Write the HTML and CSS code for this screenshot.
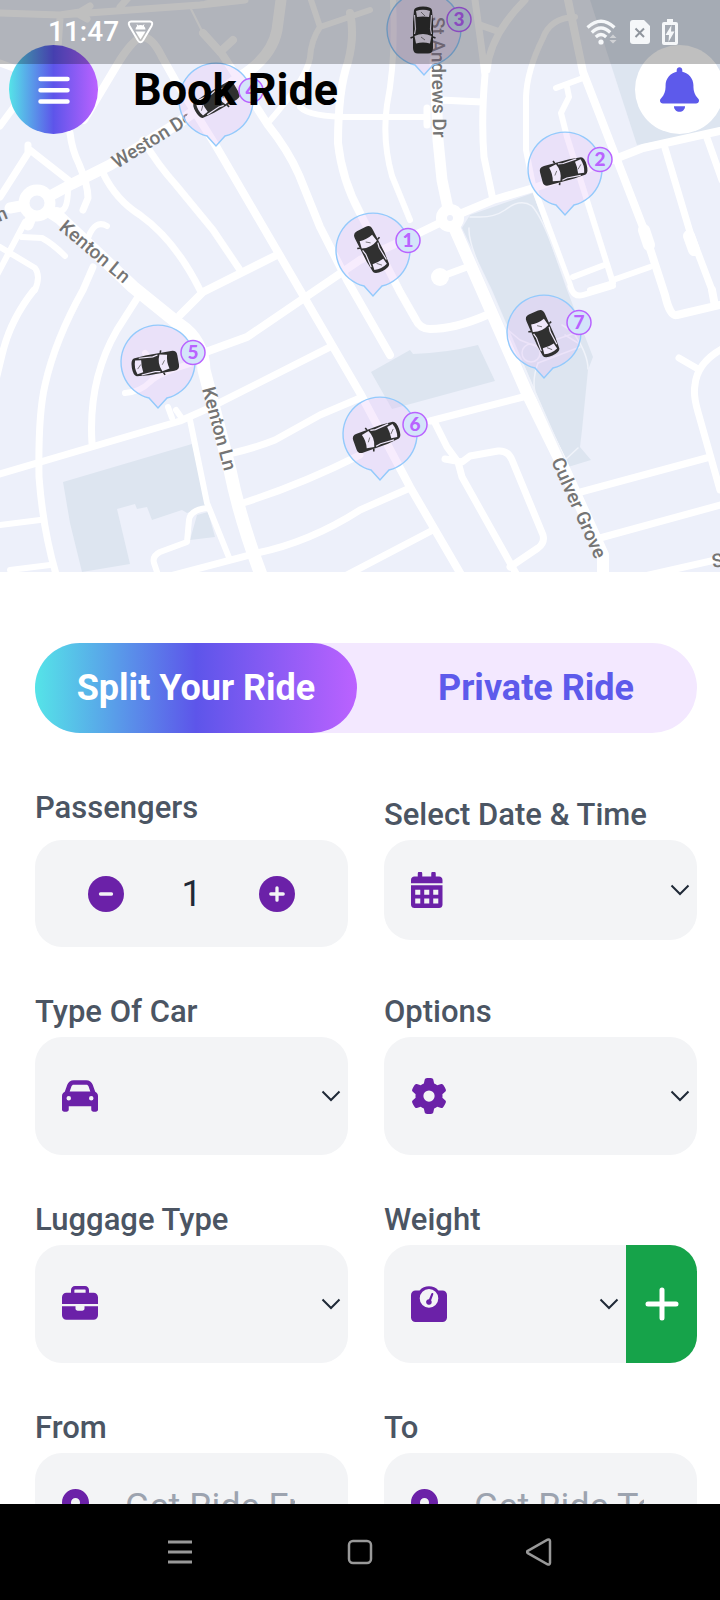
FILE: index.html
```html
<!DOCTYPE html>
<html lang="en">
<head>
<meta charset="utf-8">
<meta name="viewport" content="width=device-width, initial-scale=1">
<title>Book Ride</title>
<link rel="stylesheet" href="styles.css">
</head>
<body>
<div class="screen">
  <main class="content">
    <section class="map" aria-label="Map of nearby rides">
      <svg class="map-canvas" viewBox="0 0 720 572">
        <defs>
          <clipPath id="weston-clip"><path d="M90 100H200L187 115L184 130V190H90z"/></clipPath>
          <g id="car">
            <path d="M-9 -20Q-8 -23.500 0 -23.500T9 -20L10 -8V18Q10 23.500 5 23.500H-5Q-10 23.500 -10 18V-8z" fill="#303030"/>
            <path d="M-7 -19Q0 -21.500 7 -19L6 -13Q0 -14 -6 -13zM-8.500 6Q0 2 8.500 6L7 13.500Q0 11.500 -7 13.500z" fill="#f0e8fb"/>
            <path d="M-8.500 -15L-7.500 -1L-8.500 4M8.500 -15L7.500 -1L8.500 4" fill="none" stroke="#f0e8fb" stroke-width="1.200"/>
            <path d="M-10 7L-12.500 8M10 7L12.500 8" stroke="#303030" stroke-width="1.600"/>
            <path d="M-2 -18L2 -14M-2 7L2 10" stroke="#555" stroke-width=".7"/>
          </g>
          <g id="pin">
            <path d="M-9 36A37 37 0 1 1 9 36L0 46z" fill="#e0b8f6" fill-opacity=".27" stroke="#93cafc" stroke-width="1.400"/>
          </g>
          <circle id="badge" cx="35" cy="-9.500" r="12" fill="#d4e5fa" stroke="#b963ff" stroke-width="1.500"/>
        </defs>
        <rect width="720" height="572" fill="#edf0fa"/>
        <g fill="#dde5f0">
          <path d="M590 0L637 145L720 130V0z"/>
          <path d="M462 228L470 215L533 193L567 290L593 357L588 370L582 430L580 447L591 460L568 467L492 290z"/>
          <path d="M63 482L192 444L207 507L187 513L182 510L152 520L147 507L137 509L135 504L117 509L130 564L82 572L70 523z"/>
          <path d="M197 515L208 512L215 537L190 540z"/>
          <path d="M371 372L410 350L413 354Q446 353 478 345L495 381L392 409z"/>
        </g>
        <g fill="none" stroke="#fff" stroke-linecap="round" stroke-linejoin="round">
          <g stroke-width="7">
            <path d="M0 13L60 15L80 12L90 6M60 15L200 5L245 0M120 7L128 -2M78 14L87 19M206 4L245 -4M60 18L58 48"/>
            <path d="M84 120L120 60Q135 37 143 37Q153 38 162 57L175 80L216 146L300 290L360 393L410 487L463 578" stroke-width="8"/>
            <path d="M190 7L203 33" stroke-width="2"/>
            <path d="M203 33L222 54L268 125Q288 150 299 175L320 227L347 280L390 355M220 52L233 40" stroke-width="8"/>
            <path d="M350 13Q355 35 348 62Q338 90 338 143Q342 180 360 213L400 292L416 320Q420 329 430 329Q455 329 487 315" stroke-width="8"/>
            <path d="M370 10L320 27L311 0M320 27Q311 40 310 58Q306 80 267 124M300 107Q310 118 360 117L427 117" stroke-width="6"/>
            <path d="M393 0Q396 60 387 105Q382 140 392 176L410 220" stroke-width="6"/>
            <path d="M475 0Q482 50 485 75Q481 120 484 157L493 200M525 0Q490 35 487 70M480 25L497 31M440 100L482 102M427 108V125" stroke-width="7"/>
            <path d="M575 17Q550 18 543 38Q527 70 526 97V150L533 185L570 285Q573 298 583 295L613 286" stroke-width="6"/>
            <path d="M568 0L583 72L643 227L665 295Q670 317 677 315L720 305M712 290L715 306" stroke-width="8"/>
            <path d="M644 230L649 245M689 236L694 250" stroke-width="12"/>
            <path d="M556 88L583 78M567 87L569 97L561 113L567 137L613 283M573 277L607 264M613 280L650 267M590 290L613 283" stroke-width="6"/>
            <path d="M665 148L690 232L712 290M707 138L722 180"/>
            <path d="M440 277L467 267"/>
            <path d="M0 197L30 150L72 183M28 145V152M0 63L16 69M0 126L22 96M70 133Q72 150 79 164Q88 185 88 198L83 210"/>
            <path d="M68 188Q68 215 57 210M25 222L-3 275M22 237L42 238Q53 244 65 256M0 247L35 268Q41 276 35 290M107 226Q95 219 88 238" stroke-width="6"/>
            <path d="M103 173Q116 200 140 215Q175 240 200 290M143 140Q158 165 176 185L213 230L240 270M93 267L83 290Q55 340 45 385Q38 415 39 477Q43 530 56 574"/>
            <path d="M34 290Q10 320 2 355L-4 380M138 297L117 330Q88 380 92 443" stroke-width="7"/>
            <path d="M0 474L180 421L207 409L330 347M233 453Q255 448 275 440L320 415L360 398M243 503Q300 485 360 455M155 580L257 553Q310 542 360 510L410 488M345 576L433 530"/>
            <path d="M190 420L207 503L230 560M207 508Q190 510 189 520L187 542L160 552Q152 556 154 563L158 575M0 525L40 520M10 570L50 565" stroke-width="6"/>
            <path d="M125 393Q140 392 150 382Q158 373 193 363M168 407L172 418M145 353L158 368M176 410L181 417" stroke-width="6"/>
            <path d="M430 421L523 397M435 423L447 447L458 462L462 477L518 577M445 459L462 462L470 456L498 451Q508 450 512 460L543 535Q545 543 538 548L510 567"/>
            <path d="M577 493L710 457M600 538L724 504M640 577L720 559M679 358L698 369M722 349Q697 363 695 385Q693 395 698 412L720 490"/>
          </g>
          <g stroke-width="8">
            <path d="M450 218L493 200L537 187L620 157L643 148L720 131M450 218L415 235L360 260L247 337L203 353M277 255L203 292L180 315" stroke-width="8"/>
            <path d="M37 203L72 184L110 165L180 122L240 77Q272 57 277 30L281 0" stroke-width="11"/>
            <path d="M435 60L438 140L442 180L450 218" stroke-width="11"/>
            <path d="M450 218L480 286L527 393L560 460L603 555V580" stroke-width="12"/>
            <path d="M37 203L60 218L133 287L180 325Q203 340 204 370L230 470Q240 520 263 580" stroke-width="13"/>
            <path d="M37 203L10 208M37 203L28 225" stroke-width="11"/>
          </g>
          <circle cx="37" cy="203" r="13" stroke-width="11" fill="#edf0fa"/>
          <path d="M470 217L480 217Q495 217 505 210Q520 198 532 206Q540 215 550 240L567 285M469 228Q468 245 490 290L565 460L578 448M575 335Q588 355 588 369M538 363Q530 385 538 400L565 460" stroke="#f0f3fa" stroke-width="1.500"/>
          <circle cx="531" cy="353" r="9" stroke="#f0f3fa" stroke-width="1.500"/>
          <path d="M508 330L520 340L553 353M538 363L580 347M540 345L575 333L562 325M565 335L578 343" stroke="#f0f3fa" stroke-width="1.500"/>
        </g>
        <g fill="#fff"><circle cx="450" cy="218" r="14"/><circle cx="440" cy="277" r="9"/></g>
        <circle cx="450" cy="218" r="3" fill="#edf0fa"/>
        <g class="street">
          <g clip-path="url(#weston-clip)"><text transform="translate(117 169) rotate(-32)">Weston Do</text></g>
          <text transform="translate(-1 222) rotate(-22)">n</text>
          <text transform="translate(58 229) rotate(40)">Kenton Ln</text>
          <text transform="translate(202 389) rotate(75)">Kenton Ln</text>
          <text transform="translate(431 17) rotate(89)">St Andrews Dr</text>
          <text transform="translate(551 461) rotate(66)">Culver Grove</text>
          <text transform="translate(713 568) rotate(-10)">S</text>
        </g>
        <g class="pins">
          <g transform="translate(373 250)"><use href="#pin"/><use href="#car" transform="translate(-1 0) rotate(153)"/><use href="#badge"/><text x="35" y="-3">1</text></g>
          <g transform="translate(565 169)"><use href="#pin"/><use href="#car" transform="translate(-1 2) rotate(75)"/><use href="#badge"/><text x="35" y="-3">2</text></g>
          <g transform="translate(424 29)"><use href="#pin"/><use href="#car" transform="translate(-1 1)"/><use href="#badge"/><text x="35" y="-3">3</text></g>
          <g transform="translate(216 100)"><use href="#pin"/><use href="#car" transform="rotate(240)"/><use href="#badge"/><text x="35" y="-3">4</text></g>
          <g transform="translate(158 362)"><use href="#pin"/><use href="#car" transform="translate(-3 2) rotate(260)"/><use href="#badge"/><text x="35" y="-3">5</text></g>
          <g transform="translate(380 434)"><use href="#pin"/><use href="#car" transform="translate(-3 3) rotate(70)"/><use href="#badge"/><text x="35" y="-3">6</text></g>
          <g transform="translate(544 332)"><use href="#pin"/><use href="#car" transform="translate(-1 2) rotate(156)"/><use href="#badge"/><text x="35" y="-3">7</text></g>
        </g>
      </svg>
      <header class="topbar">
        <button class="round menu" aria-label="Menu">
          <svg width="32" height="28" viewBox="0 0 32 28" stroke="#fff" stroke-width="4.500" stroke-linecap="round"><path d="M2.500 3H29.500M2.500 14.300H29.500M2.500 25.500H29.500"/></svg>
        </button>
        <h1 class="title">Book Ride</h1>
        <button class="round bell" aria-label="Notifications">
          <svg width="39" height="45" viewBox="0 0 448 512" fill="#5d5aeb"><path d="M224 0c-17.700 0-32 14.300-32 32V51.200C119 66 64 130.600 64 208v18.800c0 47-17.300 92.400-48.500 127.600l-7.400 8.300c-8.400 9.400-10.400 22.900-5.300 34.400S19.400 416 32 416H416c12.600 0 24-7.400 29.200-18.900s3.100-25-5.300-34.400l-7.400-8.300C401.300 319.200 384 273.900 384 226.800V208c0-77.400-55-142-128-156.800V32c0-17.700-14.300-32-32-32zm45.300 493.300c12-12 18.700-28.300 18.700-45.300H224 160c0 17 6.700 33.300 18.700 45.300s28.300 18.700 45.300 18.700s33.300-6.700 45.300-18.700z"/></svg>
        </button>
      </header>
    </section>

    <form class="form">
      <div class="tabs">
        <button type="button" class="tab tab-active">Split Your Ride</button>
        <button type="button" class="tab">Private Ride</button>
      </div>
      <div class="fields">
        <div class="field">
          <label class="label label-spaced" for="passengers">Passengers</label>
          <div class="box box-short stepper">
            <button type="button" class="step" aria-label="Fewer passengers"><svg width="36" height="36" viewBox="0 0 36 36"><circle cx="18" cy="18" r="18" fill="#6b21a8"/><path d="M12.500 18H23.500" stroke="#f3f4f6" stroke-width="3.300" stroke-linecap="round"/></svg></button>
            <input class="count" id="passengers" type="text" inputmode="numeric" value="1">
            <button type="button" class="step" aria-label="More passengers"><svg width="36" height="36" viewBox="0 0 36 36"><circle cx="18" cy="18" r="18" fill="#6b21a8"/><path d="M11.800 18H24.200M18 11.800V24.200" stroke="#f3f4f6" stroke-width="3.300" stroke-linecap="round"/></svg></button>
          </div>
        </div>
        <div class="field field-low">
          <label class="label" for="when">Select Date &amp; Time</label>
          <div class="box box-date">
            <svg class="icon" viewBox="0 0 448 512"><path fill-rule="evenodd" d="M0 464c0 26.500 21.500 48 48 48h352c26.500 0 48-21.500 48-48V188H0zM60 252h72v72H60zM188 252h72v72h-72zM316 252h72v72h-72zM60 376h72v72H60zM188 376h72v72h-72zM316 376h72v72h-72zM400 64h-48V24a24 24 0 0 0-64 0v40H160V24a24 24 0 0 0-64 0v40H48C21.500 64 0 85.500 0 112v48h448v-48c0-26.500-21.500-48-48-48z"/></svg>
            <select class="select" id="when"><option></option></select>
            <svg class="chevron" viewBox="0 0 20 12"><path d="M1.500 1.500L10 10L18.500 1.500"/></svg>
          </div>
        </div>
        <div class="field">
          <label class="label" for="car-type">Type Of Car</label>
          <div class="box">
            <svg class="icon" viewBox="0 0 512 512"><path d="M135.200 117.400L109.100 192H402.900l-26.100-74.600C372.300 104.600 360.200 96 346.600 96H165.400c-13.600 0-25.700 8.600-30.200 21.400zM39.600 196.800L74.800 96.300C88.300 57.800 124.600 32 165.400 32H346.600c40.800 0 77.100 25.800 90.600 64.300l35.200 100.500c23.200 9.600 39.600 32.500 39.600 59.200V400v48c0 17.700-14.300 32-32 32H448c-17.700 0-32-14.300-32-32V400H96v48c0 17.700-14.300 32-32 32H32c-17.700 0-32-14.300-32-32V400 256c0-26.700 16.400-49.600 39.600-59.200zM128 288a32 32 0 1 0 -64 0 32 32 0 1 0 64 0zm288 32a32 32 0 1 0 0-64 32 32 0 1 0 0 64z"/></svg>
            <select class="select" id="car-type"><option></option></select>
            <svg class="chevron" viewBox="0 0 20 12"><path d="M1.500 1.500L10 10L18.500 1.500"/></svg>
          </div>
        </div>
        <div class="field">
          <label class="label" for="options">Options</label>
          <div class="box">
            <svg class="icon" viewBox="0 0 512 512"><path d="M495.900 166.600c3.200 8.700 .5 18.400-6.400 24.600l-43.300 39.400c1.100 8.300 1.700 16.800 1.700 25.400s-.6 17.100-1.700 25.400l43.300 39.400c6.900 6.200 9.600 15.900 6.400 24.600c-4.400 11.900-9.700 23.300-15.800 34.300l-4.700 8.100c-6.600 11-14 21.400-22.100 31.200c-5.900 7.200-15.700 9.600-24.500 6.800l-55.700-17.700c-13.400 10.300-28.200 18.900-44 25.400l-12.500 57.100c-2 9.100-9 16.300-18.200 17.800c-13.800 2.300-28 3.500-42.500 3.500s-28.700-1.200-42.500-3.500c-9.200-1.500-16.200-8.700-18.200-17.800l-12.500-57.100c-15.800-6.500-30.600-15.100-44-25.400L83.100 425.900c-8.800 2.800-18.600 .3-24.500-6.800c-8.100-9.800-15.500-20.200-22.100-31.200l-4.700-8.100c-6.100-11-11.400-22.400-15.800-34.300c-3.200-8.700-.5-18.400 6.400-24.600l43.300-39.400C64.600 273.100 64 264.600 64 256s.6-17.100 1.700-25.400L22.400 191.200c-6.900-6.200-9.600-15.900-6.400-24.600c4.400-11.900 9.700-23.300 15.800-34.300l4.700-8.100c6.600-11 14-21.400 22.100-31.200c5.900-7.200 15.700-9.600 24.500-6.800l55.700 17.700c13.400-10.300 28.200-18.900 44-25.400l12.500-57.100c2-9.100 9-16.300 18.200-17.800C227.300 1.200 241.500 0 256 0s28.700 1.200 42.500 3.500c9.200 1.500 16.200 8.700 18.200 17.800l12.500 57.100c15.800 6.500 30.600 15.100 44 25.400l55.700-17.700c8.800-2.800 18.600-.3 24.500 6.800c8.100 9.800 15.500 20.200 22.100 31.200l4.700 8.100c6.100 11 11.400 22.400 15.800 34.300zM256 336a80 80 0 1 0 0-160 80 80 0 1 0 0 160z"/></svg>
            <select class="select" id="options"><option></option></select>
            <svg class="chevron" viewBox="0 0 20 12"><path d="M1.500 1.500L10 10L18.500 1.500"/></svg>
          </div>
        </div>
        <div class="field">
          <label class="label" for="luggage">Luggage Type</label>
          <div class="box">
            <svg class="icon" viewBox="0 0 512 512"><path d="M184 48H328c4.400 0 8 3.600 8 8V96H176V56c0-4.400 3.600-8 8-8zm-56 8V96H64C28.700 96 0 124.700 0 160v96H192 320 512V160c0-35.300-28.700-64-64-64H384V56c0-30.900-25.100-56-56-56H184c-30.900 0-56 25.100-56 56zM512 288H320v32c0 17.700-14.300 32-32 32H224c-17.700 0-32-14.300-32-32V288H0V416c0 35.300 28.700 64 64 64H448c35.300 0 64-28.700 64-64V288z"/></svg>
            <select class="select" id="luggage"><option></option></select>
            <svg class="chevron" viewBox="0 0 20 12"><path d="M1.500 1.500L10 10L18.500 1.500"/></svg>
          </div>
        </div>
        <div class="field">
          <label class="label" for="weight">Weight</label>
          <div class="box box-split">
            <svg class="icon" viewBox="0 0 512 512"><path fill-rule="evenodd" d="M122 64H64A64 64 0 0 0 0 128V448A64 64 0 0 0 64 512H448A64 64 0 0 0 512 448V128A64 64 0 0 0 448 64H390A176 176 0 0 0 122 64zM256 44A132 132 0 1 1 256 308A132 132 0 1 1 256 44z"/><path d="M290 108A14 14 0 0 1 316 120L286 203A40 40 0 1 1 256 188z"/></svg>
            <select class="select" id="weight"><option></option></select>
            <svg class="chevron" viewBox="0 0 20 12"><path d="M1.500 1.500L10 10L18.500 1.500"/></svg>
            <button type="button" class="add" aria-label="Add weight"><svg width="34" height="34" viewBox="0 0 34 34"><path d="M3 17H31M17 3V31" stroke="#fff" stroke-width="5" stroke-linecap="round"/></svg></button>
          </div>
        </div>
        <div class="field">
          <label class="label" for="from">From</label>
          <div class="box box-short box-text">
            <svg class="icon" viewBox="0 0 384 512"><path d="M215.700 499.200C267 435 384 279.400 384 192C384 86 298 0 192 0S0 86 0 192c0 87.400 117 243 168.300 307.200c12.300 15.300 35.100 15.300 47.400 0zM192 128a64 64 0 1 1 0 128 64 64 0 1 1 0-128z"/></svg>
            <input class="text" id="from" type="text" placeholder="Get Ride From">
          </div>
        </div>
        <div class="field">
          <label class="label" for="to">To</label>
          <div class="box box-short box-text">
            <svg class="icon" viewBox="0 0 384 512"><path d="M215.700 499.200C267 435 384 279.400 384 192C384 86 298 0 192 0S0 86 0 192c0 87.400 117 243 168.300 307.200c12.300 15.300 35.100 15.300 47.400 0zM192 128a64 64 0 1 1 0 128 64 64 0 1 1 0-128z"/></svg>
            <input class="text" id="to" type="text" placeholder="Get Ride To">
          </div>
        </div>
      </div>
    </form>
  </main>

  <div class="status">
    <span class="time">11:47</span>
    <svg class="shield" width="27" height="24" viewBox="0 0 27 24"><path d="M4 1.500H23Q26.500 2 24.500 6L16 20.500Q13.500 24 11 20.500L2.500 6Q.5 2 4 1.500z" fill="none" stroke="#fff" stroke-width="2"/><path d="M8.500 9.500A5 4.500 0 0 1 18.500 9.500zM8.500 11.500H18.500L13.500 19.500z" fill="#fff"/><path d="M10 4.500L11 6.500M17 4.500L16 6.500" stroke="#fff" stroke-width="1"/></svg>
    <svg width="32" height="26" viewBox="0 0 32 26"><g fill="none" stroke="#f5f7f9" stroke-width="3.200"><path d="M1.500 8.500Q15 -4 28.500 8.500M5.800 13.500Q15 4.500 24.200 13.500M9.800 18Q15 13 20.200 18"/></g><circle cx="15" cy="23" r="2.600" fill="#f5f7f9"/><path d="M23.500 19L27 15.500L30.500 19zM23.500 21H30.500L27 24.500z" fill="#d0d2d5"/></svg>
    <svg width="20" height="24" viewBox="0 0 20 24"><path d="M3 0H14L20 6V21Q20 24 17 24H3Q0 24 0 21V3Q0 0 3 0z" fill="#f5f7f9"/><path d="M5.500 8.500L14 17M14 8.500L5.500 17" stroke="#8f959d" stroke-width="2"/></svg>
    <svg width="16" height="26" viewBox="0 0 16 26"><path d="M5 0H11V3H14Q16 3 16 5V24Q16 26 14 26H2Q0 26 0 24V5Q0 3 2 3H5z" fill="#f5f7f9"/><path d="M3 6H13V23H3z" fill="#a3a9b2"/><path d="M9.500 6L3.500 16H7L6.500 23L12.500 12.500H9z" fill="#f5f7f9"/></svg>
  </div>

  <nav class="sysnav" aria-label="System">
    <button class="sysbtn" aria-label="Recents"><svg width="28" height="28" viewBox="0 0 28 28"><path d="M2 4H26M2 14H26M2 24H26" stroke="#999" stroke-width="2.800"/></svg></button>
    <button class="sysbtn" aria-label="Home"><svg width="28" height="28" viewBox="0 0 28 28"><rect x="3" y="3" width="22" height="22" rx="4" fill="none" stroke="#999" stroke-width="2.500"/></svg></button>
    <button class="sysbtn" aria-label="Back"><svg width="28" height="28" viewBox="0 0 28 28"><path d="M1.800 12.800L21.500 1.700Q23.800 1 24 3V25Q23.800 27 21.500 26.300L1.800 15.200Q.2 14 1.800 12.800z" fill="none" stroke="#999" stroke-width="2.500"/></svg></button>
  </nav>
</div>
</body>
</html>
```
FILE: styles.css
```css
* { box-sizing: border-box; }
body {
  margin: 0;
  background: #fff;
  font-family: Roboto, "Liberation Sans", sans-serif;
}
button, input, select {
  font: inherit;
  border: 0;
  padding: 0;
  margin: 0;
  background: none;
  border-radius: 0;
}
svg { display: block; flex: none; }

.screen {
  position: relative;
  display: flex;
  flex-direction: column;
  height: 100vh;
}
.content {
  flex: 1;
  min-height: 0;
  overflow: hidden;
}

/* Map */
.map {
  position: relative;
  overflow: hidden;
}
.map-canvas { width: 100%; height: auto; }
.street { font-size: 19px; font-weight: 500; fill: #757575; }
.pins text {
  font-family: Lato, sans-serif;
  font-size: 19px;
  font-weight: 900;
  fill: #b963ff;
  text-anchor: middle;
}
.topbar {
  position: absolute;
  top: 45px;
  left: 9px;
  right: -4px;
  display: flex;
  align-items: center;
}
.round {
  flex: none;
  width: 89px;
  height: 89px;
  border-radius: 50%;
  display: grid;
  place-items: center;
}
.menu { background: linear-gradient(90deg, #55e4e8, #5d55ea 50%, #bb62ff); }
.bell { background: #fff; }
.title {
  flex: 1;
  margin: 0;
  padding-left: 35px;
  font-size: 45px;
  line-height: 54px;
  font-weight: 700;
  color: #000;
}

/* Form */
.form { padding: 71px 23px 0 35px; }
.tabs {
  display: grid;
  grid-template-columns: 1fr 1fr;
  gap: 18px;
  border-radius: 45px;
  background: #f3e8ff;
}
.tab {
  height: 90px;
  border-radius: 45px;
  font-size: 36px;
  font-weight: 700;
  color: #5d5aeb;
}
.tab-active {
  color: #fff;
  background: linear-gradient(90deg, #55e4e8, #5d55ea 50%, #bb62ff);
}
.fields {
  display: grid;
  grid-template-columns: 1fr 1fr;
  gap: 40px 36px;
  align-items: start;
  padding-top: 50px;
}
.field { min-width: 0; }
.field-low { padding-top: 7px; }
.label {
  display: block;
  font-size: 31px;
  line-height: 50px;
  font-weight: 500;
  color: #4b5563;
}
.label-spaced { margin-bottom: 7px; }
.box {
  display: flex;
  align-items: center;
  height: 118px;
  padding: 0 7px 0 27px;
  border-radius: 27px;
  background: #f3f4f6;
  overflow: hidden;
}
.box-short { height: 107px; }
.box-date { height: 100px; }
.box-split { padding-right: 0; }
.box-text { padding-right: 53px; }
.icon { height: 36px; width: auto; fill: #6b21a8; }
.select {
  flex: 1;
  min-width: 0;
  height: 100%;
  appearance: none;
  color: #1f2937;
  font-size: 31px;
}
.chevron {
  width: 20px;
  height: 12px;
  fill: none;
  stroke: #1f2937;
  stroke-width: 2;
}
.stepper { justify-content: space-between; padding: 0 53px; }
.step { width: 36px; height: 36px; }
.count {
  width: 90px;
  font-size: 36px;
  text-align: center;
  color: #1f2937;
}
.add {
  width: 71px;
  height: 100%;
  margin-left: 7px;
  display: grid;
  place-items: center;
  background: #16a34a;
}
.text {
  flex: 1;
  min-width: 0;
  margin-left: 36px;
  font-size: 36px;
  line-height: 44px;
  color: #1f2937;
}
.text::placeholder { color: #9ca3af; opacity: 1; }

/* Device bars */
.status {
  position: absolute;
  inset: 0 0 auto 0;
  display: flex;
  align-items: center;
  gap: 12px;
  height: 64px;
  padding: 0 42px 0 48px;
  background: rgba(0, 0, 0, 0.25);
}
.time { font-size: 28px; line-height: 32px; font-weight: 500; color: #fff; }
.shield { margin-left: -4px; margin-right: auto; }
.sysnav {
  flex: none;
  display: grid;
  grid-template-columns: repeat(3, 1fr);
  height: 96px;
  padding: 0 90px;
  background: #000;
}
.sysbtn { display: grid; place-items: center; }
```
